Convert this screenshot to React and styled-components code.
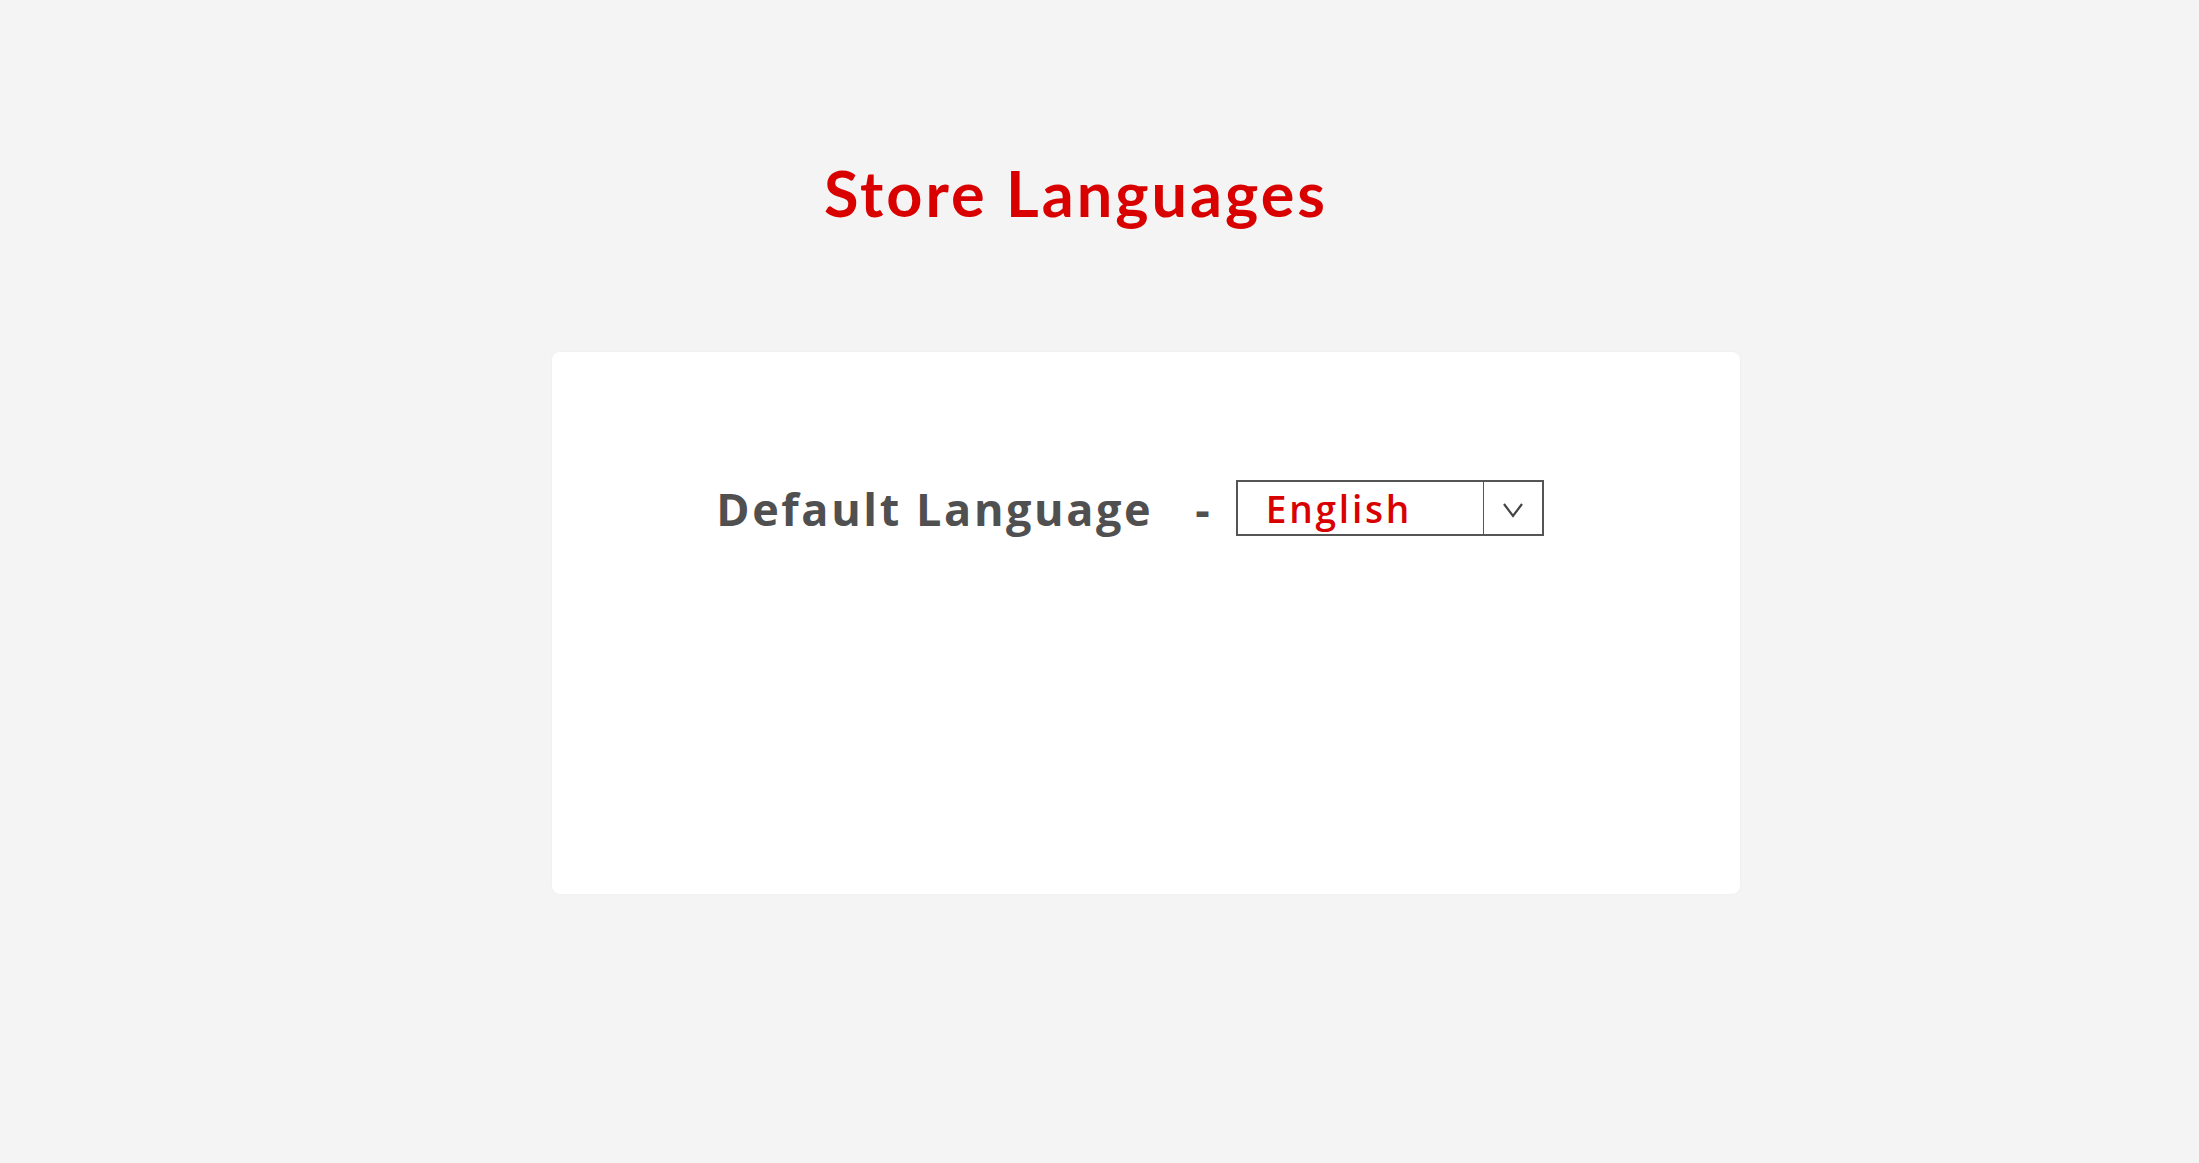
import React from 'react'
import styled, { createGlobalStyle } from 'styled-components'

const GlobalStyle = createGlobalStyle`
    html, body {
        margin: 0;
        padding: 0;
        background: #f4f4f4;
    }
    body {
        font-family: "Open Sans", "Liberation Sans", sans-serif;
    }
`

const StoreLanguages = () => {
    return (
        <Page>
            <GlobalStyle />
            <Title>Store Languages</Title>
            <Card>
                <Row>
                    <Label>Default Language</Label>
                    <Dash>-</Dash>
                    <Select>
                        <Value>English</Value>
                        <Toggle>
                            <svg width="22" height="16" viewBox="0 0 22 16" fill="none">
                                <polyline points="2,2 11,14 20,2" stroke="#444" strokeWidth="2.2" strokeLinejoin="miter" />
                            </svg>
                        </Toggle>
                    </Select>
                </Row>
            </Card>
        </Page>
    )
}

export default StoreLanguages

const Page = styled.div`
    min-height: 100vh;
    box-sizing: border-box;
    padding: 161px 0 0 552px;
    display: flex;
    flex-direction: column;
    align-items: flex-start;
`

const Title = styled.h1`
    width: 1188px;
    box-sizing: border-box;
    padding-right: 140px;
    margin: 0;
    text-align: center;
    font-family: Lato, "Noto Sans", sans-serif;
    font-weight: 700;
    font-size: 63px;
    line-height: 1;
    color: #d90000;
    letter-spacing: 3px;
`

const Card = styled.div`
    width: 1188px;
    height: 542px;
    margin-top: 128px;
    box-sizing: border-box;
    padding: 128px 32px 0 0;
    background: #fff;
    border-radius: 8px;
    box-shadow: 0 0 3px rgba(0, 0, 0, 0.04);
    display: flex;
    justify-content: center;
    align-items: flex-start;
`

const Row = styled.div`
    display: flex;
    align-items: center;
`

const Label = styled.span`
    font-family: "Open Sans", sans-serif;
    font-weight: 700;
    font-size: 45px;
    line-height: 1;
    color: #505050;
    letter-spacing: 2.6px;
`

const Dash = styled.span`
    margin: 0 26px 0 42px;
    font-family: "Open Sans", sans-serif;
    font-weight: 700;
    font-size: 45px;
    line-height: 1;
    color: #505050;
`

const Select = styled.div`
    width: 308px;
    height: 56px;
    box-sizing: border-box;
    border: 2px solid #555;
    display: flex;
    align-items: stretch;
    background: #fff;
`

const Value = styled.div`
    flex: 1;
    display: flex;
    align-items: center;
    padding-left: 28px;
    font-family: "Open Sans", sans-serif;
    font-weight: 600;
    font-size: 37px;
    color: #d90000;
    letter-spacing: 2.8px;
`

const Toggle = styled.div`
    width: 58px;
    border-left: 1.5px solid #555;
    display: flex;
    align-items: center;
    justify-content: center;
    padding-top: 4px;
`
